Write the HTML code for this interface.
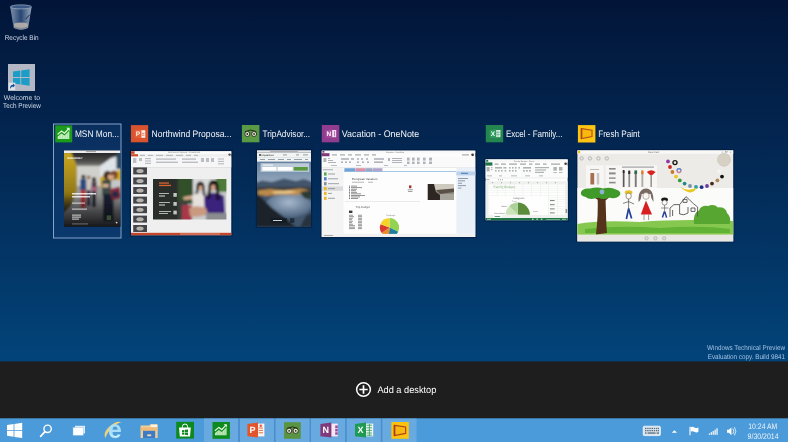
<!DOCTYPE html>
<html lang="en">
<head>
<meta charset="utf-8">
<title>Task View</title>
<style>
html,body{margin:0;padding:0;background:#021538;overflow:hidden;}
body{width:788px;height:442px;position:relative;font-family:"Liberation Sans",sans-serif;}
svg{position:absolute;left:0;top:0;display:block;}
text{font-family:"Liberation Sans",sans-serif;text-rendering:geometricPrecision;}
.t{fill:#f4f6fa;font-size:9.5px;}
.d{fill:#d2dbe8;font-size:7.1px;}
.w{fill:#a4c2e4;font-size:6.9px;}
.c{fill:#eaf3fb;font-size:8px;}
</style>
</head>
<body>
<svg width="788" height="442" viewBox="0 0 788 442">
<defs>
<linearGradient id="bg" x1="0" y1="0" x2="0" y2="1">
<stop offset="0" stop-color="#021538"/>
<stop offset="0.5" stop-color="#032b58"/>
<stop offset="1" stop-color="#02447a"/>
</linearGradient>
<filter id="b1" x="-5%" y="-5%" width="110%" height="110%"><feGaussianBlur stdDeviation="0.5"/></filter>
<filter id="b2" x="-5%" y="-5%" width="110%" height="110%"><feGaussianBlur stdDeviation="0.9"/></filter>
<filter id="b3" x="-10%" y="-10%" width="120%" height="120%"><feGaussianBlur stdDeviation="1.6"/></filter>
<clipPath id="c1"><rect x="64" y="150.3" width="56.5" height="76.4"/></clipPath>
<clipPath id="c2"><rect x="131" y="151.2" width="100.5" height="84.4"/></clipPath>
<clipPath id="c3"><rect x="257" y="150.3" width="54" height="76.4"/></clipPath>
<clipPath id="c4"><rect x="321.5" y="150.4" width="154" height="86.6"/></clipPath>
<clipPath id="c5"><rect x="485.4" y="159.2" width="82.4" height="61.2"/></clipPath>
<clipPath id="c6"><rect x="577.4" y="150.4" width="155.8" height="91"/></clipPath>
<linearGradient id="fl1" x1="0" y1="0" x2="0" y2="1"><stop offset="0" stop-color="#4a4a48"/><stop offset="0.5" stop-color="#1c1c20"/><stop offset="1" stop-color="#0e0f13"/></linearGradient>
<linearGradient id="lk1" x1="0" y1="0" x2="0" y2="1"><stop offset="0" stop-color="#c9a822"/><stop offset="0.7" stop-color="#8f7618"/><stop offset="1" stop-color="#2a2510"/></linearGradient>
<linearGradient id="sky3" x1="0" y1="0" x2="0" y2="1"><stop offset="0" stop-color="#5f7e9f"/><stop offset="1" stop-color="#93a6ba"/></linearGradient>
<radialGradient id="wat3" cx="0.5" cy="0.4" r="0.6"><stop offset="0" stop-color="#a6b8cc"/><stop offset="1" stop-color="#4e6580"/></radialGradient>
<linearGradient id="ce1" x1="0" y1="0" x2="0" y2="1"><stop offset="0" stop-color="#242424"/><stop offset="0.6" stop-color="#4a4a48"/><stop offset="1" stop-color="#8a8a87"/></linearGradient>
<linearGradient id="ov1" x1="0" y1="0" x2="0" y2="1"><stop offset="0" stop-color="#0c0d11" stop-opacity="0"/><stop offset="0.55" stop-color="#0c0d11" stop-opacity="0.6"/><stop offset="1" stop-color="#0c0d11" stop-opacity="0.95"/></linearGradient>
<clipPath id="c2s"><rect x="153" y="179" width="73.4" height="40.6"/></clipPath>
<filter id="noop" x="0" y="0" width="788" height="442" filterUnits="userSpaceOnUse"><feOffset dx="0" dy="0"/></filter>
<linearGradient id="bin" x1="0" y1="0" x2="1" y2="0"><stop offset="0" stop-color="#7a8ca4"/><stop offset="0.22" stop-color="#5a7294"/><stop offset="0.5" stop-color="#264572"/><stop offset="0.8" stop-color="#6c82a0"/><stop offset="1" stop-color="#93a2b6"/></linearGradient>
</defs>
<!-- BACKGROUND -->
<rect x="0" y="0" width="788" height="362" fill="url(#bg)"/>
<rect x="0" y="361.4" width="788" height="58" fill="#1e1e1e"/>
<rect x="0" y="418.3" width="788" height="24" fill="#4b9ad9"/>

<!-- DESKTOP ICONS -->
<g id="desk" filter="url(#noop)">
<!-- recycle bin -->
<path d="M10.2 7 L13.7 28 Q21 31.6 28.1 28 L31.6 7 Z" fill="url(#bin)"/>
<path d="M14 23.6 Q21 21.4 27.9 23.6 L27.6 27.8 Q21 31 14.3 27.8 Z" fill="#b7b0aa" fill-opacity="0.92"/>
<path d="M14.6 26.6 Q21 29.4 27.4 26.6 L27.4 28 Q21 31.2 14.5 28 Z" fill="#7e8894"/>
<ellipse cx="20.9" cy="6.9" rx="10.6" ry="2" fill="#3a5684" stroke="#8fa0b8" stroke-width="0.9"/>
<path d="M29.8 14.6 L25.6 19.2" stroke="#16233c" stroke-width="0.9"/>
<text class="d" x="21.7" y="40" text-anchor="middle" textLength="34" lengthAdjust="spacingAndGlyphs">Recycle Bin</text>
<!-- welcome -->
<rect x="8" y="64" width="27" height="27" fill="#b3b8c4"/>
<path d="M13 71.6 L20.3 70.5 V77 H13 Z M21.2 70.4 L29.6 69.2 V77 H21.2 Z M13 77.9 H20.3 V84.4 L13 83.3 Z M21.2 77.9 H29.6 V85.7 L21.2 84.5 Z" fill="#1c9cc6"/>
<rect x="8.6" y="82.6" width="6.6" height="7.4" fill="#dfe4ea"/>
<path d="M10 89 Q10 84.8 13 84.8 V83.5 L15 85.6 L13 87.6 V86.4 Q11.2 86.4 10 89 Z" fill="#14509a"/>
<text class="d" x="21.9" y="99.6" text-anchor="middle" textLength="36.2" lengthAdjust="spacingAndGlyphs">Welcome to</text>
<text class="d" x="21.9" y="108.3" text-anchor="middle" textLength="37.7" lengthAdjust="spacingAndGlyphs">Tech Preview</text>
</g>

<!-- TASK VIEW WINDOWS -->
<g id="wins" filter="url(#noop)">
<g fill="none" stroke="#00102c" stroke-opacity="0.4" stroke-width="1.2">
<rect x="130.4" y="150.2" width="101.7" height="85.8"/>
<rect x="256.4" y="149.4" width="55.2" height="78"/>
<rect x="320.9" y="149.8" width="155.2" height="87.8"/>
<rect x="484.8" y="158.6" width="83.6" height="62.4"/>
<rect x="576.8" y="149.8" width="157" height="92.2"/>
</g>
<!-- 1 MSN Money -->
<rect x="53.5" y="124" width="67.5" height="114" fill="#1a4580" fill-opacity="0.35" stroke="#86a4cb" stroke-width="1"/>
<g id="i-money">
<rect x="55.2" y="125.4" width="17" height="17" fill="#1b9a1b"/>
<path d="M57.7 138.9 V136.6 L61.5 133.5 L64.5 135.6 L69.3 130.8 V138.9 Z" fill="#c6efbf"/>
<path d="M60 135 V138.9 M62.6 134.6 V138.9 M65.2 135.2 V138.9 M67.6 133 V138.9" stroke="#8fd48a" stroke-width="0.5"/>
<path d="M57.6 134.4 L61.5 131 L64.5 133.2 L68.4 129" stroke="#e8fbe4" stroke-width="1.2" fill="none"/>
<path d="M66.4 127.8 H69.6 V131 Z" fill="#e8fbe4"/>
</g>
<text class="t" x="74.9" y="136.9" textLength="44.1" lengthAdjust="spacingAndGlyphs">MSN Mon...</text>
<g id="th1" clip-path="url(#c1)">
<rect x="64" y="150.3" width="56.5" height="76.4" fill="#18191d"/>
<g filter="url(#b2)">
<rect x="62" y="152" width="60" height="15" fill="url(#ce1)"/>
<rect x="74" y="166" width="28" height="21" fill="#d0d0cc"/>
<rect x="62" y="186" width="60" height="42" fill="#9c9c9a"/>
<path d="M62 152 H71 L77 166 V190 L71 206 L62 214 Z" fill="url(#lk1)"/>
<path d="M100 166 L111 158 L122 155 V174 L100 178 Z" fill="#dfe4e8"/>
<path d="M100 177 L122 169 V192 L100 187 Z" fill="#c9a92a"/>
<rect x="116.4" y="152" width="6" height="17" fill="#2c4660"/>
<!-- boy -->
<circle cx="83.4" cy="176.8" r="2.1" fill="#2a2020"/>
<rect x="80.2" y="179" width="6.2" height="11.6" rx="1" fill="#25487e"/>
<rect x="80.8" y="190" width="4.6" height="18" fill="#b8282c"/>
<!-- girls -->
<circle cx="88.6" cy="177.4" r="1.9" fill="#8a6a48"/>
<rect x="86.6" y="179.4" width="4" height="11" fill="#cfc4c0"/>
<rect x="86.8" y="190" width="3.6" height="16" fill="#22273a"/>
<circle cx="94" cy="179.4" r="2.1" fill="#241a18"/>
<rect x="91.6" y="181.4" width="5" height="10" fill="#4a4048"/>
<rect x="92" y="187" width="4.4" height="5" fill="#b06080"/>
<rect x="92" y="191" width="4" height="16" fill="#1c2030"/>
<!-- couple -->
<ellipse cx="107.6" cy="175.4" rx="4.2" ry="4.6" fill="#4a2a1e"/>
<ellipse cx="114" cy="175" rx="3.6" ry="4.4" fill="#7a4428"/>
<ellipse cx="109.6" cy="177" rx="1.8" ry="2.4" fill="#e0b090"/>
<ellipse cx="112.6" cy="177" rx="1.5" ry="2.2" fill="#d8a888"/>
<rect x="102" y="180" width="10" height="16" rx="2" fill="#3a4a44"/>
<rect x="111" y="180" width="10" height="13" rx="2" fill="#c4c6c8"/>
<rect x="102.6" y="184" width="6" height="3.4" fill="#d9b096"/>
<rect x="103" y="194" width="10.6" height="27" fill="#1a2136"/>
<path d="M110 189 L120 186.6 L121 198 L112 200.6 Z" fill="#8a2c3c"/>
<path d="M112 192 L118 190.4 L118.6 196 L113 197.6 Z" fill="#1e2a4a"/>
<rect x="62" y="192" width="60" height="36" fill="url(#ov1)"/>
</g>
<rect x="64" y="150.3" width="56.5" height="2.7" fill="#ecedee"/>
<rect x="86" y="151.3" width="10" height="0.8" fill="#8a8a8a"/>
<text x="67.2" y="158.6" font-size="2.5" font-weight="bold" fill="#fff">MSN MONEY</text>
<g fill="#fff" fill-opacity="0.8">
<rect x="72" y="193" width="24" height="1.5"/><rect x="72" y="196" width="18" height="1.5"/>
<rect x="72" y="202.6" width="13" height="1"/><rect x="72" y="208.6" width="15" height="1"/>
<rect x="72" y="214.6" width="9" height="1"/><rect x="72" y="216.6" width="9" height="1"/><rect x="72" y="218.6" width="7" height="1"/>
<rect x="72" y="223.6" width="16" height="0.7" fill-opacity="0.5"/>
</g>
<rect x="106.6" y="215.4" width="4.6" height="4.6" fill="#4a5a3a" fill-opacity="0.8"/>
<circle cx="116.6" cy="222.6" r="0.9" fill="#d8d8d8"/>
</g>
<!-- 2 PowerPoint -->
<g id="i-ppt">
<rect x="130.9" y="125.1" width="17.3" height="17.2" fill="#d9532f"/>
<rect x="140.8" y="130.2" width="4.5" height="7.6" fill="#fbeee6"/>
<path d="M141.8 133.4 H144.4 M141.8 135.2 H144.4" stroke="#d9532f" stroke-width="0.7"/>
<path d="M134.8 130 L141.4 129.2 V138.2 L134.8 137.4 Z" fill="#e5613a"/>
<text x="138" y="136.2" text-anchor="middle" font-size="6.6" font-weight="bold" fill="#fff3e6">P</text>
</g>
<text class="t" x="151.6" y="136.9" textLength="80" lengthAdjust="spacingAndGlyphs">Northwind Proposa...</text>
<g id="th2" clip-path="url(#c2)">
<rect x="131" y="150.8" width="100.5" height="84.6" fill="#efefef"/>
<rect x="131" y="150.8" width="100.5" height="3.4" fill="#fafafa"/>
<rect x="131" y="150.8" width="3.6" height="3" fill="#c9421f"/>
<rect x="131" y="154.2" width="7" height="2.4" fill="#d04a26"/>
<text x="168" y="153.4" font-size="2.2" fill="#777">Northwind Proposal - PowerPoint</text>
<rect x="131" y="156.6" width="100.5" height="10.4" fill="#f6f6f6"/>
<rect x="131" y="167" width="100.5" height="0.5" fill="#d4d4d4"/>
<g fill="#8a8f98" fill-opacity="0.55">
<rect x="140" y="154.8" width="5" height="1.2"/><rect x="148" y="154.8" width="5" height="1.2"/><rect x="156" y="154.8" width="7" height="1.2"/><rect x="166" y="154.8" width="7" height="1.2"/><rect x="176" y="154.8" width="7" height="1.2"/><rect x="186" y="154.8" width="5" height="1.2"/><rect x="194" y="154.8" width="4" height="1.2"/>
<rect x="133" y="158" width="3.4" height="5"/><rect x="139" y="158" width="3" height="3"/><rect x="145" y="158" width="6" height="1.2"/><rect x="145" y="160.4" width="6" height="1.2"/><rect x="145" y="162.8" width="6" height="1.2"/>
<rect x="156" y="158.4" width="20" height="1.4"/><rect x="156" y="161.6" width="22" height="1.4"/>
<rect x="182" y="158.4" width="14" height="1.4"/><rect x="182" y="161.6" width="16" height="1.4"/>
<rect x="201" y="158" width="3" height="4"/><rect x="206" y="158" width="3" height="4"/><rect x="211" y="158" width="3" height="4"/>
<rect x="218" y="158.4" width="6" height="1.2"/><rect x="218" y="160.8" width="6" height="1.2"/><rect x="218" y="163.2" width="6" height="1.2"/>
</g>
<circle cx="229.6" cy="154.6" r="1.2" fill="#5a4a3a"/>
<g filter="url(#b1)">
<rect x="133.2" y="167.4" width="13.8" height="7" fill="#45454a"/><ellipse cx="140" cy="171.0" rx="3.6" ry="2" fill="#b5b2ae"/>
<rect x="133.2" y="177.4" width="13.8" height="7" fill="#45454a"/><ellipse cx="140" cy="181.0" rx="3.6" ry="2" fill="#b5b2ae"/>
<rect x="133.2" y="187.0" width="13.8" height="7" fill="#45454a"/><ellipse cx="140" cy="190.6" rx="3.6" ry="2" fill="#b5b2ae"/>
<rect x="133.2" y="196.6" width="13.8" height="7" fill="#45454a"/><ellipse cx="140" cy="200.2" rx="3.6" ry="2" fill="#b5b2ae"/>
<rect x="133.2" y="206.2" width="13.8" height="7" fill="#45454a"/><ellipse cx="140" cy="209.8" rx="3.6" ry="2" fill="#b5b2ae"/>
<rect x="133.2" y="215.6" width="13.8" height="7" fill="#45454a"/><ellipse cx="140" cy="219.2" rx="3.6" ry="2" fill="#b5b2ae"/>
<rect x="133.2" y="225.0" width="13.8" height="7" fill="#45454a"/><ellipse cx="140" cy="228.6" rx="3.6" ry="2" fill="#b5b2ae"/>
</g>
<g clip-path="url(#c2s)"><g filter="url(#b2)">
<rect x="150" y="176" width="80" height="47" fill="#c9cbcb"/>
<rect x="150" y="176" width="29" height="47" fill="#2b2e2a"/>
<rect x="178" y="176" width="15" height="28" fill="#33502a"/>
<rect x="178" y="201" width="10" height="22" fill="#3a3f3a"/>
<rect x="216" y="176" width="14" height="16" fill="#4f7a3a"/>
<rect x="193" y="176" width="23" height="15" fill="#d9dbdb"/>
<rect x="182" y="205" width="10" height="18" fill="#a8394a"/>
<path d="M183 197 L194 195 L195 199 L184 200 Z" fill="#d4a88c"/>
<path d="M192 196 Q198 191 206 195 L208 209 H193 Z" fill="#e6e1dc"/>
<path d="M196.4 188 Q196 181.6 200.4 181.6 Q204.8 181.6 204.6 189 L205.4 196 H203 L202.6 190 H198.4 L197.6 194 H195.6 Z" fill="#1f1612"/>
<ellipse cx="200.6" cy="188" rx="2" ry="2.7" fill="#d6a88c"/>
<path d="M204 197 Q213 189 224 196 L225 215 H205 Z" fill="#3a217c"/>
<path d="M208.4 188 Q208 180 213.4 180 Q219 180 218.6 189 L220 200 H216.6 L216 190 H211 L210 199 H207 Z" fill="#17100e"/>
<ellipse cx="213.2" cy="187.6" rx="2.3" ry="3.1" fill="#d2a184"/>
<path d="M189 208 Q196 204.6 206 208 L208 214 Q198 218 190 216 Z" fill="#c99a80"/>
<rect x="206" y="213" width="24" height="10" fill="#8a8c90"/>
</g></g>
<rect x="159" y="182.4" width="10" height="1.3" fill="#d9642e"/><rect x="159" y="184.8" width="12" height="1.3" fill="#d9642e"/>
<g fill="#e8e8e8" fill-opacity="0.8"><rect x="159" y="193" width="10" height="0.9"/><rect x="159" y="195.4" width="6" height="1.2"/><rect x="159" y="202" width="11" height="0.9"/><rect x="159" y="204.4" width="6" height="1.2"/><rect x="159" y="211" width="12" height="0.9"/><rect x="159" y="213" width="9" height="0.9"/>
<rect x="173.4" y="193" width="3.4" height="3.8"/><rect x="173.4" y="202" width="3.4" height="3.8"/><rect x="173.4" y="210.6" width="3.4" height="3.8"/></g>
<rect x="131" y="232.8" width="100.5" height="2.6" fill="#c5462a"/>
<rect x="180" y="233.6" width="40" height="0.8" fill="#e9a090"/>
</g>
<!-- 3 TripAdvisor -->
<g id="i-trip">
<rect x="241.9" y="125" width="17.5" height="17.3" fill="#5b9a44"/>
<path d="M245 131.6 Q250.7 128.6 256.4 131.6" stroke="#222a1c" stroke-width="1" fill="none"/>
<circle cx="247.3" cy="134" r="2.5" fill="#ecebd6" stroke="#222a1c" stroke-width="0.9"/>
<circle cx="254.1" cy="134" r="2.5" fill="#ecebd6" stroke="#222a1c" stroke-width="0.9"/>
<circle cx="247.3" cy="134" r="0.9" fill="#222a1c"/>
<circle cx="254.1" cy="134" r="0.9" fill="#222a1c"/>
</g>
<text class="t" x="262.6" y="136.9" textLength="47.5" lengthAdjust="spacingAndGlyphs">TripAdvisor...</text>
<g id="th3" clip-path="url(#c3)">
<rect x="257" y="150" width="54" height="77" fill="#26303c"/>
<g filter="url(#b2)">
<rect x="255" y="160" width="58" height="22" fill="url(#sky3)"/>
<path d="M255 183 L262 180.5 L272 182 L284 178.5 L296 181 L304 179 L313 182 V190 H255 Z" fill="#42546a"/>
<rect x="255" y="187" width="58" height="14" fill="#3a3c40"/>
<rect x="255" y="196" width="58" height="32" fill="#3f546c"/>
<ellipse cx="289" cy="205" rx="23" ry="12.5" fill="url(#wat3)"/>
<path d="M258 190.6 L270 189 L284 190.6 L300 188.6 L311 190.6 L311 193.6 L296 195 L280 194.4 L266 196 L258 194.4 Z" fill="#b98a4a"/>
<path d="M272 191.4 L290 190.6 L298 192 L288 193.6 L274 193.6 Z" fill="#ecc98a"/>
<path d="M255 194 L262 198 L272 208 L284 217 L296 227 H255 Z" fill="#1b222b"/>
<path d="M313 212 L306 216 L300 227 H313 Z" fill="#27313c"/>
<path d="M300 192 L311 190 V200 L304 198 Z" fill="#2c3a34"/>
</g>
<rect x="257" y="150" width="54" height="2.6" fill="#e4e6e8"/>
<rect x="270" y="150.9" width="28" height="0.8" fill="#7a7a7a" fill-opacity="0.7"/>
<rect x="257" y="152.6" width="54" height="9" fill="#f2f4f3"/>
<rect x="257" y="157.4" width="54" height="0.4" fill="#c9cdcf"/>
<circle cx="260" cy="155" r="1" fill="#3a3a3a"/>
<text x="261.6" y="155.8" font-size="2.4" font-weight="bold" fill="#3c4a3c">tripadvisor</text>
<g fill="#6b7c86" fill-opacity="0.7"><rect x="283" y="154.4" width="4" height="1"/><rect x="296" y="154.4" width="3" height="1"/><rect x="303" y="154.4" width="5" height="1"/>
<rect x="260" y="159" width="5" height="1"/><rect x="268" y="159" width="7" height="1"/><rect x="278" y="159" width="6" height="1"/><rect x="287" y="159" width="4" height="1"/><rect x="294" y="159" width="8" height="1"/><rect x="305" y="159" width="3" height="1"/></g>
<rect x="260.6" y="163.2" width="48.6" height="8.6" fill="#eef3f6" fill-opacity="0.62"/>
<rect x="262.4" y="167" width="14" height="3.6" fill="#fff"/>
<rect x="277.6" y="167" width="15" height="3.6" fill="#fff"/>
<rect x="293.8" y="167" width="14" height="3.6" fill="#5a9a3e"/>
<rect x="263" y="164.6" width="10" height="0.9" fill="#fff"/>
<rect x="270.8" y="218.2" width="15.8" height="4.6" fill="#141a22" fill-opacity="0.85"/>
<rect x="273" y="220" width="9" height="1" fill="#c9d1d9"/>
<rect x="290" y="218.2" width="4.4" height="4.6" fill="#141a22" fill-opacity="0.7"/>
</g>
<!-- 4 OneNote -->
<g id="i-on">
<rect x="321.8" y="125" width="17.5" height="17.3" fill="#913c8e"/>
<rect x="331.4" y="130" width="4.8" height="7.2" fill="#f3e3f2"/>
<path d="M334.6 131 V136.4" stroke="#b56bb2" stroke-width="1"/>
<path d="M325.6 130 L332.2 129.2 V138.2 L325.6 137.4 Z" fill="#a24a9f"/>
<text x="328.8" y="136" text-anchor="middle" font-size="6.4" font-weight="bold" fill="#fff">N</text>
</g>
<text class="t" x="341.8" y="136.9" textLength="77.5" lengthAdjust="spacingAndGlyphs">Vacation - OneNote</text>
<g id="th4" clip-path="url(#c4)">
<rect x="321.5" y="150.4" width="154" height="86.6" fill="#fdfdfe"/>
<rect x="321.5" y="150.4" width="154" height="2.8" fill="#f8f8f9"/>
<rect x="322.4" y="150.9" width="2" height="1.8" fill="#80397b"/>
<text x="386" y="152.6" font-size="2.1" fill="#777">Vacation - OneNote</text>
<rect x="321.5" y="153.2" width="8" height="3.2" fill="#80397b"/>
<g fill="#6a6f78" fill-opacity="0.7"><rect x="332" y="154.4" width="5" height="1"/><rect x="340" y="154.4" width="5" height="1"/><rect x="348" y="154.4" width="4" height="1"/><rect x="355" y="154.4" width="6" height="1"/><rect x="364" y="154.4" width="5" height="1"/><rect x="372" y="154.4" width="4" height="1"/><rect x="462" y="154.4" width="7" height="1"/></g>
<circle cx="472.6" cy="154.8" r="1.4" fill="#4a3a30"/>
<rect x="321.5" y="156.6" width="154" height="10.8" fill="#fafafb"/>
<rect x="321.5" y="167.4" width="154" height="0.5" fill="#d8d8dc"/>
<g fill="#7f8590" fill-opacity="0.6">
<rect x="323.4" y="158" width="3" height="4"/><rect x="328" y="158" width="2" height="1"/><rect x="328" y="160" width="5" height="1"/><rect x="328" y="162" width="8" height="1"/>
<rect x="341" y="158.2" width="8" height="1.6"/><rect x="351" y="158.2" width="3" height="1.6"/><rect x="357" y="158.2" width="2" height="1.6"/><rect x="361" y="158.2" width="2" height="1.6"/><rect x="366" y="158.2" width="2" height="1.6"/>
<rect x="341" y="161.4" width="2" height="1.6"/><rect x="345" y="161.4" width="2" height="1.6"/><rect x="349" y="161.4" width="2" height="1.6"/><rect x="357" y="161.4" width="2" height="1.6"/><rect x="362" y="161.4" width="2" height="1.6"/><rect x="367" y="161.4" width="2" height="1.6"/>
<rect x="374" y="158.2" width="10" height="1.6"/><rect x="374" y="161.4" width="9" height="1.6"/><rect x="388" y="158" width="2" height="3"/>
<rect x="392" y="158" width="10" height="1"/><rect x="392" y="160" width="10" height="1"/><rect x="392" y="162" width="10" height="1"/>
<rect x="407" y="157.6" width="2.6" height="3"/><rect x="412" y="157.6" width="2.6" height="3"/><rect x="417" y="157.6" width="2.6" height="3"/><rect x="423" y="157.6" width="2.6" height="3"/><rect x="429" y="157.6" width="3" height="3"/>
<rect x="407" y="161.6" width="2.6" height="2.4"/><rect x="412" y="161.6" width="2.6" height="2.4"/><rect x="417" y="161.6" width="2.6" height="2.4"/><rect x="423" y="161.6" width="2.6" height="2.4"/><rect x="429" y="161.6" width="3" height="2.4"/>
<rect x="331" y="165" width="6" height="0.9"/><rect x="356" y="165" width="5" height="0.9"/><rect x="384" y="165" width="4" height="0.9"/><rect x="404" y="165" width="3" height="0.9"/>
</g>
<rect x="321.5" y="167.9" width="22" height="66" fill="#f4f4f5"/>
<rect x="323" y="169.2" width="10" height="1" fill="#8a8f98" fill-opacity="0.7"/>
<rect x="324" y="172.4" width="2.6" height="3.2" fill="#5aa84a"/><rect x="328" y="173.5" width="7" height="1" fill="#7a7f86" fill-opacity="0.7"/>
<rect x="324" y="177.2" width="2.6" height="3.2" fill="#4a7fc4"/><rect x="328" y="178.3" width="10" height="1" fill="#7a7f86" fill-opacity="0.7"/>
<rect x="324" y="182.1" width="2.6" height="3.2" fill="#8a8f98"/><rect x="328" y="183.2" width="11" height="1" fill="#7a7f86" fill-opacity="0.7"/>
<rect x="322" y="186.4" width="21" height="4.4" fill="#d9dadb"/><rect x="324" y="187.0" width="2.6" height="3.2" fill="#e8b828"/><rect x="328" y="188.1" width="7" height="1" fill="#7a7f86" fill-opacity="0.7"/>
<rect x="324" y="191.8" width="2.6" height="3.2" fill="#e8b828"/><rect x="328" y="192.9" width="4" height="1" fill="#7a7f86" fill-opacity="0.7"/>
<rect x="324" y="196.7" width="2.6" height="3.2" fill="#e8b828"/><rect x="328" y="197.8" width="7" height="1" fill="#7a7f86" fill-opacity="0.7"/>
<rect x="344.4" y="168.2" width="11" height="3.2" fill="#6fa3d8"/>
<rect x="355.6" y="168.2" width="9.4" height="3.2" fill="#de8ea4"/>
<rect x="365.2" y="168.2" width="7" height="3.2" fill="#9aa6c4"/>
<rect x="372.4" y="168.2" width="10" height="3.2" fill="#b0a6c9"/>
<rect x="344" y="171.4" width="112" height="0.6" fill="#6fa3d8"/>
<text x="352" y="180" font-size="3" fill="#444">European Vacation</text>
<rect x="352" y="181.8" width="12" height="0.7" fill="#9a9a9a"/><rect x="368" y="181.8" width="5" height="0.7" fill="#9a9a9a"/>
<rect x="349" y="185.60" width="1" height="1" fill="#6a6a6a"/><rect x="351" y="185.70" width="6" height="0.8" fill="#5a5a5a" fill-opacity="0.8"/><rect x="349" y="187.15" width="1" height="1" fill="#6a6a6a"/><rect x="351" y="187.25" width="11" height="0.8" fill="#5a5a5a" fill-opacity="0.8"/><rect x="349" y="188.70" width="1" height="1" fill="#6a6a6a"/><rect x="351" y="188.80" width="6" height="0.8" fill="#5a5a5a" fill-opacity="0.8"/><rect x="349" y="190.25" width="1" height="1" fill="#6a6a6a"/><rect x="351" y="190.35" width="5" height="0.8" fill="#5a5a5a" fill-opacity="0.8"/><rect x="349" y="191.80" width="1" height="1" fill="#6a6a6a"/><rect x="351" y="191.90" width="6" height="0.8" fill="#5a5a5a" fill-opacity="0.8"/><rect x="349" y="193.35" width="1" height="1" fill="#6a6a6a"/><rect x="351" y="193.45" width="10" height="0.8" fill="#5a5a5a" fill-opacity="0.8"/><rect x="349" y="194.90" width="1" height="1" fill="#6a6a6a"/><rect x="351" y="195.00" width="14" height="0.8" fill="#5a5a5a" fill-opacity="0.8"/><rect x="349" y="196.45" width="1" height="1" fill="#6a6a6a"/><rect x="351" y="196.55" width="9" height="0.8" fill="#5a5a5a" fill-opacity="0.8"/><rect x="349" y="198.00" width="1" height="1" fill="#6a6a6a"/><rect x="351" y="198.10" width="7" height="0.8" fill="#5a5a5a" fill-opacity="0.8"/><rect x="345" y="201.6" width="75" height="0.4" fill="#d0d0d4"/>
<text x="355.6" y="208" font-size="2.8" fill="#555">Trip Budget</text>
<rect x="349" y="210.6" width="3.4" height="2.4" fill="#3a3a3a"/>
<rect x="349" y="214.80" width="4" height="0.8" fill="#555" fill-opacity="0.75"/><rect x="358" y="214.80" width="4" height="0.8" fill="#555" fill-opacity="0.75"/><rect x="349" y="216.30" width="5" height="0.8" fill="#555" fill-opacity="0.75"/><rect x="358" y="216.30" width="4" height="0.8" fill="#555" fill-opacity="0.75"/><rect x="349" y="217.80" width="4" height="0.8" fill="#555" fill-opacity="0.75"/><rect x="358" y="217.80" width="4" height="0.8" fill="#555" fill-opacity="0.75"/><rect x="349" y="219.30" width="3" height="0.8" fill="#555" fill-opacity="0.75"/><rect x="358" y="219.30" width="4" height="0.8" fill="#555" fill-opacity="0.75"/><rect x="349" y="220.80" width="4" height="0.8" fill="#555" fill-opacity="0.75"/><rect x="358" y="220.80" width="4" height="0.8" fill="#555" fill-opacity="0.75"/><rect x="349" y="222.30" width="3" height="0.8" fill="#555" fill-opacity="0.75"/><rect x="358" y="222.30" width="4" height="0.8" fill="#555" fill-opacity="0.75"/><rect x="349" y="223.80" width="4" height="0.8" fill="#555" fill-opacity="0.75"/><rect x="358" y="223.80" width="4" height="0.8" fill="#555" fill-opacity="0.75"/><rect x="349" y="225.30" width="6" height="0.8" fill="#555" fill-opacity="0.75"/><rect x="358" y="225.30" width="4" height="0.8" fill="#555" fill-opacity="0.75"/><rect x="349" y="226.80" width="6" height="0.8" fill="#555" fill-opacity="0.75"/><rect x="358" y="226.80" width="4" height="0.8" fill="#555" fill-opacity="0.75"/><rect x="349" y="228.30" width="6" height="0.8" fill="#555" fill-opacity="0.75"/><rect x="358" y="228.30" width="4" height="0.8" fill="#555" fill-opacity="0.75"/><path d="M389.5 227.6 L389.50 218.00 A9.6 9.6 0 0 1 398.20 231.66 Z" fill="#93d34f"/><path d="M389.5 227.6 L398.20 231.66 A9.6 9.6 0 0 1 388.66 237.16 Z" fill="#1f7f9a"/><path d="M389.5 227.6 L388.66 237.16 A9.6 9.6 0 0 1 381.64 233.11 Z" fill="#f08a24"/><path d="M389.5 227.6 L381.64 233.11 A9.6 9.6 0 0 1 380.48 224.32 Z" fill="#d93a2e"/><path d="M389.5 227.6 L380.48 224.32 A9.6 9.6 0 0 1 389.50 218.00 Z" fill="#f5d327"/><text x="386" y="216.4" font-size="1.8" fill="#777">Trip Budget</text>
<rect x="409" y="185.4" width="2.4" height="2.8" fill="#a8322a"/>
<rect x="407.6" y="189.4" width="5.4" height="0.8" fill="#8a8a8a"/><rect x="408" y="191" width="4.4" height="0.8" fill="#8a8a8a"/>
<g filter="url(#b1)">
<rect x="427.8" y="184" width="26.2" height="16" fill="#8f8a80"/>
<rect x="433" y="184" width="21" height="6.5" fill="#cfcabf"/>
<path d="M427.8 184 H434 L436 192 L440 195 V200 H427.8 Z" fill="#2f2620"/>
<path d="M436 190 L454 188.4 V192 L440 194 Z" fill="#5a5046"/>
<rect x="440" y="194" width="14" height="6" fill="#a5a39c"/>
</g>
<rect x="456.4" y="167.9" width="19.2" height="66" fill="#eaf0f8"/>
<rect x="456.4" y="171.4" width="19.2" height="4" fill="#bcd2ec"/>
<rect x="461" y="172.8" width="7" height="1" fill="#4a78b0"/>
<g fill="#6a7a90" fill-opacity="0.8"><rect x="458" y="178" width="10" height="0.9"/><rect x="458" y="180.4" width="7" height="0.9"/><rect x="458" y="182.8" width="4" height="0.9"/><rect x="458" y="185.2" width="8" height="0.9"/><rect x="458" y="187.6" width="3.4" height="0.9"/></g>
<rect x="321.5" y="233.9" width="154" height="3.1" fill="#f1f1f2"/>
<rect x="324" y="235" width="9" height="0.8" fill="#9a9a9a"/>
</g>
<!-- 5 Excel -->
<g id="i-xl">
<rect x="485.8" y="125" width="17.4" height="17.3" fill="#25854f"/>
<rect x="495.6" y="130" width="4.8" height="7.2" fill="#e3f3e8"/>
<path d="M498 130.4 V137 M496 132.4 H500 M496 134.6 H500" stroke="#4aa672" stroke-width="0.6"/>
<path d="M489.6 130 L496.2 129.2 V138.2 L489.6 137.4 Z" fill="#2f9a5e"/>
<text x="492.8" y="136" text-anchor="middle" font-size="6.4" font-weight="bold" fill="#fff">X</text>
</g>
<text class="t" x="506" y="136.9" textLength="56.4" lengthAdjust="spacingAndGlyphs">Excel - Family...</text>
<g id="th5" clip-path="url(#c5)">
<rect x="485.4" y="159.2" width="82.4" height="61.2" fill="#fdfefd"/>
<rect x="485.4" y="159.2" width="82.4" height="3.2" fill="#f7f8f7"/>
<rect x="486.2" y="159.8" width="2" height="1.9" fill="#1e7145"/>
<text x="514" y="161.7" font-size="2.1" fill="#777">Family Budget - Excel</text>
<rect x="485.4" y="162.4" width="7" height="3.4" fill="#1f7446"/>
<g fill="#5a6a60" fill-opacity="0.7"><rect x="494.6" y="163.6" width="4" height="1"/><rect x="501" y="163.6" width="5" height="1"/><rect x="509" y="163.6" width="8" height="1"/><rect x="520" y="163.6" width="6" height="1"/><rect x="529" y="163.6" width="3.4" height="1"/><rect x="535" y="163.6" width="5" height="1"/><rect x="543" y="163.6" width="3.6" height="1"/><rect x="551" y="163.6" width="9" height="1"/></g>
<circle cx="565.6" cy="163.8" r="1.3" fill="#4a3a30"/>
<rect x="485.4" y="165.8" width="82.4" height="12" fill="#fafbfa"/>
<g fill="#7a857e" fill-opacity="0.6">
<rect x="486.6" y="167" width="3" height="4.4"/><rect x="491" y="167" width="1.4" height="1.2"/><rect x="491" y="169" width="1.4" height="1.2"/>
<rect x="495" y="167" width="7" height="1.6"/><rect x="503.4" y="167" width="3" height="1.6"/><rect x="495" y="170" width="1.6" height="1.6"/><rect x="498" y="170" width="1.6" height="1.6"/><rect x="501" y="170" width="1.6" height="1.6"/><rect x="504.6" y="170" width="1.6" height="1.6"/>
<rect x="509" y="167" width="1.6" height="1.6"/><rect x="512" y="167" width="1.6" height="1.6"/><rect x="515" y="167" width="1.6" height="1.6"/><rect x="509" y="170" width="1.6" height="1.6"/><rect x="512" y="170" width="1.6" height="1.6"/><rect x="515" y="170" width="1.6" height="1.6"/><rect x="518.4" y="167" width="1.6" height="1.6"/>
<rect x="523" y="167" width="8" height="1.6"/><rect x="523" y="170" width="1.8" height="1.6"/><rect x="526" y="170" width="1.8" height="1.6"/><rect x="529" y="170" width="1.8" height="1.6"/>
<rect x="535" y="167" width="14" height="1.2"/><rect x="535" y="169.4" width="11" height="1.2"/><rect x="535" y="171.8" width="9" height="1.2"/>
<rect x="553.4" y="167" width="3.4" height="3.6"/><rect x="559" y="167" width="3.4" height="3.6"/><rect x="553.4" y="172" width="3.4" height="0.9"/><rect x="559" y="172" width="3.4" height="0.9"/>
<rect x="487" y="175.4" width="5" height="0.9"/><rect x="499" y="175.4" width="3" height="0.9"/><rect x="511" y="175.4" width="6" height="0.9"/><rect x="525" y="175.4" width="5" height="0.9"/><rect x="539" y="175.4" width="4" height="0.9"/>
</g>
<rect x="485.4" y="177.8" width="82.4" height="0.4" fill="#d5dad5"/>
<rect x="485.4" y="181.2" width="82.4" height="2.8" fill="#eef0ee"/>
<rect x="485.4" y="184" width="3" height="31" fill="#eef0ee"/>
<g fill="#7a857e" fill-opacity="0.7"><rect x="486.4" y="179.2" width="3" height="1"/><rect x="498" y="179.2" width="1" height="1"/><rect x="500" y="179.2" width="1" height="1"/><rect x="502" y="179.2" width="1" height="1"/>
<rect x="492" y="182.2" width="1" height="1"/><rect x="501" y="182.2" width="1" height="1"/><rect x="510" y="182.2" width="1" height="1"/><rect x="519" y="182.2" width="1" height="1"/><rect x="528" y="182.2" width="1" height="1"/><rect x="537" y="182.2" width="1" height="1"/><rect x="546" y="182.2" width="1" height="1"/><rect x="555" y="182.2" width="1" height="1"/></g>
<rect x="497.0" y="184" width="0.3" height="31" fill="#dde3dd"/><rect x="505.6" y="184" width="0.3" height="31" fill="#dde3dd"/><rect x="514.2" y="184" width="0.3" height="31" fill="#dde3dd"/><rect x="522.8" y="184" width="0.3" height="31" fill="#dde3dd"/><rect x="531.4" y="184" width="0.3" height="31" fill="#dde3dd"/><rect x="540.0" y="184" width="0.3" height="31" fill="#dde3dd"/><rect x="548.6" y="184" width="0.3" height="31" fill="#dde3dd"/><rect x="557.2" y="184" width="0.3" height="31" fill="#dde3dd"/><rect x="565.8" y="184" width="0.3" height="31" fill="#dde3dd"/><rect x="485.4" y="184.0" width="80" height="0.25" fill="#dde3dd"/><rect x="485.4" y="186.2" width="80" height="0.25" fill="#dde3dd"/><rect x="485.4" y="188.4" width="80" height="0.25" fill="#dde3dd"/><rect x="485.4" y="190.6" width="80" height="0.25" fill="#dde3dd"/><rect x="485.4" y="192.8" width="80" height="0.25" fill="#dde3dd"/><rect x="485.4" y="195.0" width="80" height="0.25" fill="#dde3dd"/><rect x="485.4" y="197.2" width="80" height="0.25" fill="#dde3dd"/><rect x="485.4" y="199.4" width="80" height="0.25" fill="#dde3dd"/><rect x="485.4" y="201.6" width="80" height="0.25" fill="#dde3dd"/><rect x="485.4" y="203.8" width="80" height="0.25" fill="#dde3dd"/><rect x="485.4" y="206.0" width="80" height="0.25" fill="#dde3dd"/><rect x="485.4" y="208.2" width="80" height="0.25" fill="#dde3dd"/><rect x="485.4" y="210.4" width="80" height="0.25" fill="#dde3dd"/><rect x="485.4" y="212.6" width="80" height="0.25" fill="#dde3dd"/><rect x="485.4" y="214.8" width="80" height="0.25" fill="#dde3dd"/><rect x="490" y="196" width="58" height="19" fill="#fdfefd"/>
<text x="493.6" y="187.8" font-size="3.3" fill="#8ab57a">Family Budget</text>
<text x="513.2" y="198.6" font-size="2.3" fill="#6a6a6a">Categories</text>
<path d="M517.8 214.8 L517.80 202.60 A12.2 12.2 0 0 1 530.00 214.80 Z" fill="#5b8c3c"/><path d="M517.8 214.8 L505.60 214.80 A12.2 12.2 0 0 1 509.17 206.17 Z" fill="#c9e2ba"/><path d="M517.8 214.8 L509.17 206.17 A12.2 12.2 0 0 1 517.80 202.60 Z" fill="#aed19a"/><text x="501" y="206.8" font-size="1.9" fill="#666">Utilities</text>
<text x="533" y="212" font-size="1.9" fill="#666">Food</text>
<text x="494" y="214.4" font-size="1.9" fill="#666">Phone/Email</text>
<text x="512" y="202.4" font-size="1.7" fill="#777">Travel</text>
<g fill="#5a5a5a" fill-opacity="0.75"><rect x="550" y="200" width="4.6" height="1"/><rect x="550" y="204.2" width="4.6" height="1"/><rect x="550" y="208.4" width="4.6" height="1"/><rect x="550" y="212.4" width="4.6" height="1"/></g>
<rect x="565" y="184" width="2.8" height="31" fill="#eef0ee"/>
<rect x="565.6" y="209" width="1.6" height="4" fill="#8a958e"/>
<rect x="485.4" y="215" width="82.4" height="3" fill="#eef0ee"/>
<rect x="493" y="215.4" width="9" height="2.4" fill="#fdfefd"/>
<rect x="494.6" y="216.2" width="5.6" height="0.8" fill="#3f8a5a"/>
<rect x="485.4" y="218" width="82.4" height="2.5" fill="#1f7446"/>
<g fill="#bfe0cc"><rect x="487" y="218.8" width="4" height="0.8"/><rect x="532" y="218.6" width="1.6" height="1.2"/><rect x="536.4" y="218.6" width="1.6" height="1.2"/><rect x="540.8" y="218.6" width="1.6" height="1.2"/><rect x="546" y="219" width="14" height="0.5"/><rect x="562" y="218.8" width="4" height="0.8"/></g>
</g>
<!-- 6 Fresh Paint -->
<g id="i-fp">
<rect x="577.9" y="125.1" width="17.5" height="17.4" fill="#fdc513"/>
<path d="M581.6 128.6 L592 130.2 V136.6 L581.6 138.6 Z" fill="#f9b80e" stroke="#b5531a" stroke-width="1.2" stroke-linejoin="miter"/>
<path d="M581.4 128.2 V139" stroke="#a94a16" stroke-width="1.6"/>
</g>
<text class="t" x="598.2" y="136.9" textLength="41.6" lengthAdjust="spacingAndGlyphs">Fresh Paint</text>
<g id="th6" clip-path="url(#c6)">
<rect x="577.4" y="150.4" width="155.8" height="91" fill="#ecebe8"/>
<rect x="577.4" y="150.4" width="155.8" height="3.4" fill="#f8f8f7"/>
<rect x="578" y="151" width="2.2" height="2.2" fill="#f5c116"/>
<text x="648" y="153" font-size="2.2" fill="#666">Fresh Paint</text>
<g fill="#888" fill-opacity="0.8"><rect x="721.6" y="151.8" width="1.8" height="0.6"/><rect x="725.6" y="151.4" width="1.6" height="1.4" fill="none" stroke="#888" stroke-width="0.4"/><rect x="729.6" y="151.8" width="1.8" height="0.6"/></g>
<g fill="#e0dfdc" stroke="#9a9a98" stroke-width="0.5"><circle cx="581.6" cy="158.4" r="1.8"/><circle cx="590" cy="158.4" r="1.8"/><circle cx="598.4" cy="158.4" r="1.8"/><circle cx="606.8" cy="158.4" r="1.8"/></g>
<rect x="586" y="165.2" width="17.8" height="23" fill="#f7f6f4"/>
<rect x="605.6" y="165.2" width="51.4" height="23" fill="#f7f6f4"/>
<rect x="590.4" y="173" width="3.8" height="11.6" rx="0.6" fill="#a86e50"/>
<rect x="596.8" y="173" width="2.4" height="11.6" rx="0.6" fill="#c9c6c2"/>
<rect x="590" y="169" width="9" height="0.8" fill="#b0afac"/>
<g fill="#6f6f72" fill-opacity="0.8"><rect x="609" y="168" width="6.6" height="1.6"/><rect x="609" y="172.4" width="6.6" height="2"/><rect x="609" y="177.4" width="6.6" height="1.4"/><rect x="609" y="181.8" width="6.6" height="1.6"/></g>
<rect x="622" y="166.6" width="32" height="1" fill="#8f9296"/>
<g>
<rect x="622.8" y="171" width="1.7" height="16" fill="#5a5a5c"/><rect x="622.8" y="170" width="1.7" height="3" fill="#2a2a2a"/>
<rect x="628.4" y="172" width="1.7" height="15" fill="#8a8a88"/><rect x="628.2" y="170.6" width="2.1" height="3.4" fill="#2f2f30"/>
<rect x="634.8" y="172" width="1.9" height="15" fill="#7a7a78"/><rect x="634.4" y="170.4" width="2.7" height="3.6" fill="#2f6a4a"/>
<rect x="641.4" y="172" width="1.9" height="15" fill="#b0aca6"/><rect x="641.2" y="170.4" width="2.3" height="3.8" fill="#e07a2a"/>
<rect x="650.4" y="174" width="1.6" height="13" fill="#9a9690"/><path d="M646.8 172 Q651.2 168.4 655.6 172 L652.4 175 H650 Z" fill="#d8241e"/>
</g>
<rect x="577.4" y="188" width="155.8" height="47" fill="#fbfbfa"/>
<circle cx="724" cy="159.8" r="6.4" fill="#d7d1c5" stroke="#c4beb2" stroke-width="0.6"/>
<circle cx="675" cy="162.6" r="2" fill="none" stroke="#1a1a1a" stroke-width="1.4"/>
<circle cx="679" cy="170.6" r="1.9" fill="none" stroke="#c87a9a" stroke-width="1.3"/>
<path d="M677.1 170.6 A1.9 1.9 0 0 1 680.9 170.6" fill="none" stroke="#4a8ad8" stroke-width="1.3"/>
<circle cx="668.0" cy="161.4" r="1.9" fill="#8a3aa8"/><circle cx="670.0" cy="167.0" r="1.9" fill="#c8281e"/><circle cx="672.4" cy="172.0" r="1.9" fill="#c87a2a"/><circle cx="676.0" cy="176.6" r="1.9" fill="#e8c81e"/><circle cx="679.8" cy="180.4" r="1.9" fill="#3a9a3a"/><circle cx="684.6" cy="183.6" r="1.9" fill="#1f8a8a"/><circle cx="690.0" cy="186.0" r="1.9" fill="#7a8fa8"/><circle cx="696.0" cy="187.0" r="1.9" fill="#1fa0a8"/><circle cx="701.6" cy="187.2" r="1.9" fill="#1f2f8a"/><circle cx="707.0" cy="186.0" r="1.9" fill="#6a3a9a"/><circle cx="712.0" cy="183.6" r="1.9" fill="#4a2a1a"/><circle cx="717.4" cy="180.4" r="1.9" fill="#b08a5a"/><circle cx="722.0" cy="176.6" r="1.9" fill="#111111"/><circle cx="719.0" cy="171.4" r="1.9" fill="#f4f4f4"/><path d="M680.4 187 Q688 192 697 187.6 Q691 197.6 680.4 187 Z" fill="#e8c81e"/>
<!-- grass -->
<g filter="url(#b1)">
<path d="M577.4 224 Q600 219.6 640 222 Q680 218.6 733.2 221 V234.8 H577.4 Z" fill="#86c850"/>
<path d="M585 229 Q620 225 660 228 Q700 225 730 229 V233 H585 Z" fill="#62b234"/>
<!-- bush -->
<path d="M694 224 Q692.6 213 699 210.4 Q701 205 708 206 Q714 203.6 718 207.4 Q726 207 727 213 Q731.6 217 729.6 224 Z" fill="#58a630"/>
<!-- tree -->
<path d="M597.6 196 L605.4 195 L606 214 Q606.4 228 607 233 L596 234.4 Q598.4 214 597.6 196 Z" fill="#54301a"/>
<path d="M598 199 L590 193.6 M605 200 L612 194" stroke="#54301a" stroke-width="1.6"/>
<path d="M581 192 Q583 187.6 590 188.6 Q597 186.4 603 188.4 Q611 186.8 616 189.4 Q621.6 191 620 195 Q616 199.6 609 197.6 Q604 200.6 598 197.6 Q590 200.8 585.6 197 Q580 196 581 192 Z" fill="#3f9a2c"/>
<circle cx="602" cy="192" r="2.4" fill="#8fb0d0"/>
</g>
<!-- boy -->
<ellipse cx="628.6" cy="192.4" rx="3.8" ry="2.2" fill="#e8c02a"/>
<ellipse cx="628.6" cy="196" rx="2.7" ry="3" fill="#fdfaf4" stroke="#3a3a3a" stroke-width="0.5"/>
<path d="M628.6 199 V209 M623 203.4 L628.6 201.6 L634 204" stroke="#4a4a4a" stroke-width="0.7" fill="none"/>
<path d="M628.6 208.6 L626.4 219 M628.6 208.6 L631.6 218.6" stroke="#23409a" stroke-width="1.7" fill="none"/>
<!-- girl -->
<path d="M638.6 202 Q637.6 189 646 188.4 Q654 188.6 653.4 202 Q650.6 198 650.6 194 H641.6 Q641.6 199 638.6 202 Z" fill="#7a6a64"/>
<ellipse cx="646" cy="196" rx="3.2" ry="3.4" fill="#fdf6ee" stroke="#4a4a4a" stroke-width="0.4"/>
<path d="M646 200.6 L640.8 214.6 H652 Z" fill="#d81e1e"/>
<path d="M644 214.6 V220 M648.6 214.6 V220" stroke="#5a5a5a" stroke-width="0.6"/>
<!-- small boy -->
<ellipse cx="664.6" cy="199.6" rx="3.4" ry="2.2" fill="#1a1a1a"/>
<ellipse cx="664.6" cy="202.6" rx="2.5" ry="2.6" fill="#fdfaf6" stroke="#3a3a3a" stroke-width="0.5"/>
<path d="M664.6 205.2 V212 M661 208 H668.4" stroke="#4a4a4a" stroke-width="0.6"/>
<path d="M664.4 211.6 L662.4 217.6 M664.8 211.6 L666.6 217.6" stroke="#23409a" stroke-width="1.5"/>
<!-- house -->
<path d="M670 217 V208 L674 204.6 H679.6 L686 196.6 L693.4 203.6 L697.6 207 V216.6 M679.6 204.6 V214 Q684 216 688 213 V207 M672.6 210 V216 M683 199.4 h4 v3 h-4 z M691 208 h4 v3.4 h-4 z" fill="none" stroke="#55555a" stroke-width="0.9"/>
<!-- bottom bar -->
<rect x="577.4" y="234.8" width="155.8" height="6.6" fill="#e9e7e4"/>
<g fill="#dedcd8" stroke="#9a9a98" stroke-width="0.5"><circle cx="646.6" cy="238.3" r="1.7"/><circle cx="655.4" cy="238.3" r="1.7"/><circle cx="664.2" cy="238.3" r="1.7"/></g>
</g>
</g>

<!-- ADD DESKTOP -->
<g id="add" filter="url(#noop)">
<circle cx="363.5" cy="389.5" r="6.85" fill="none" stroke="#fff" stroke-width="1.5"/>
<path d="M359.3 389.5 H367.7 M363.5 385.3 V393.7" stroke="#fff" stroke-width="1.7" fill="none"/>
<text x="377.4" y="393.3" fill="#fff" font-size="9.6" textLength="59" lengthAdjust="spacingAndGlyphs">Add a desktop</text>
<text class="w" x="785" y="350" text-anchor="end" textLength="78" lengthAdjust="spacingAndGlyphs">Windows Technical Preview</text>
<text class="w" x="785" y="359.1" text-anchor="end" textLength="77.3" lengthAdjust="spacingAndGlyphs">Evaluation copy. Build 9841</text>
</g>

<!-- TASKBAR -->
<g id="bar" filter="url(#noop)">
<!-- active buttons -->
<g fill="#68a9df">
<rect x="204" y="418.6" width="34.2" height="23.4"/>
<rect x="240" y="418.6" width="34" height="23.4"/>
<rect x="275.4" y="418.6" width="34.2" height="23.4"/>
<rect x="311" y="418.6" width="34.2" height="23.4"/>
<rect x="346.6" y="418.6" width="34.2" height="23.4"/>
<rect x="382.2" y="418.6" width="34.4" height="23.4"/>
</g>
<g fill="#4a8ccc">
<rect x="238.4" y="418.6" width="1.4" height="23.4"/>
<rect x="274.2" y="418.6" width="1.2" height="23.4"/>
<rect x="309.8" y="418.6" width="1.2" height="23.4"/>
<rect x="345.4" y="418.6" width="1.2" height="23.4"/>
<rect x="381" y="418.6" width="1.2" height="23.4"/>
</g>
<!-- start -->
<path d="M7 425 L13.6 424 V430 H7 Z M14.4 423.9 L22.2 422.7 V430 H14.4 Z M7 430.8 H13.6 V436.8 L7 435.8 Z M14.4 430.8 H22.2 V438 L14.4 436.9 Z" fill="#fff"/>
<!-- search -->
<circle cx="47.6" cy="428.8" r="3.7" fill="none" stroke="#fff" stroke-width="1.4"/>
<path d="M45 431.6 L40.6 436.4" stroke="#fff" stroke-width="1.7" stroke-linecap="round"/>
<!-- task view -->
<rect x="75" y="425.8" width="10" height="7.6" fill="#e2eef9"/>
<rect x="73" y="427.5" width="10.3" height="7.8" fill="#fff" stroke="#8fc0ea" stroke-width="0.5"/>
<!-- IE -->
<g id="tb-ie">
<path d="M105.6 438 Q102.4 433 109.4 426.4 Q116.6 420 121.6 422.2 Q117.4 422.8 112 428 Q106.4 433.6 105.6 438 Z" fill="#ecd27a"/>
<text x="114.8" y="438.1" text-anchor="middle" font-size="25.5" font-weight="bold" fill="#a8def8" textLength="13.8" lengthAdjust="spacingAndGlyphs">e</text>
<path d="M110.6 434.4 Q114 438 119.6 435.6" stroke="#e8f6fd" stroke-width="0.8" fill="none"/>
</g>
<!-- explorer -->
<g id="tb-ex">
<path d="M140.6 425.6 H149 L150.6 424.2 H157.6 V438 H140.6 Z" fill="#f3cf98"/>
<rect x="150.8" y="424.6" width="6.4" height="2.6" fill="#fbf3e4"/>
<rect x="140.6" y="427.4" width="17" height="3.4" fill="#eebc78"/>
<rect x="143" y="430.8" width="12.2" height="7.2" fill="#3d7cc4"/>
<rect x="147.2" y="434.4" width="4" height="1.8" fill="#f3dcb4"/>
</g>
<!-- store -->
<g id="tb-st">
<rect x="176.2" y="421.8" width="17.8" height="16.8" fill="#0c8a20"/>
<path d="M182.4 427.8 V426.6 A2.6 2.6 0 0 1 187.6 426.6 V427.8" fill="none" stroke="#fff" stroke-width="1"/>
<path d="M179 427.6 H190.8 L190 436.6 H179.8 Z" fill="#fff"/>
<path d="M182 430.2 L184.4 429.9 V432 H182 Z M185 429.8 L188 429.4 V432 H185 Z M182 432.6 H184.4 V434.7 L182 434.4 Z M185 432.6 H188 V435.2 L185 434.8 Z" fill="#0c8a20"/>
</g>
<!-- app icons -->
<g id="tb-apps">
<!-- money -->
<rect x="212.5" y="422" width="17.4" height="16.8" fill="#0f8a1e"/>
<g transform="translate(157.3 296.4)">
<path d="M57.7 138.9 V136.6 L61.5 133.5 L64.5 135.6 L69.3 130.8 V138.9 Z" fill="#bfe8b8"/>
<path d="M60 135 V138.9 M62.6 134.6 V138.9 M65.2 135.2 V138.9 M67.6 133 V138.9" stroke="#7fc87a" stroke-width="0.5"/>
<path d="M57.6 134.4 L61.5 131 L64.5 133.2 L68.4 129" stroke="#e8fbe4" stroke-width="1.2" fill="none"/>
<path d="M66.4 127.8 H69.6 V131 Z" fill="#e8fbe4"/>
</g>
<!-- ppt -->
<rect x="256" y="423.6" width="8.4" height="12.8" fill="#fbf3ee"/>
<path d="M258.6 428 H263 M258.6 430.4 H263 M258.6 432.8 H263" stroke="#e0633c" stroke-width="0.9"/>
<circle cx="260.8" cy="425.8" r="1.3" fill="#e0633c"/>
<path d="M247.4 424 L258 422.6 V437.6 L247.4 436.2 Z" fill="#e1552b"/>
<text x="252.6" y="433.4" text-anchor="middle" font-size="9" font-weight="bold" fill="#fff">P</text>
<!-- trip -->
<rect x="284" y="422.2" width="16.8" height="16.6" fill="#5a9443"/>
<path d="M286.8 428.4 Q292.4 425.4 298 428.4" stroke="#222a1c" stroke-width="1" fill="none"/>
<circle cx="289.1" cy="430.8" r="2.6" fill="#ecebd6" stroke="#222a1c" stroke-width="0.9"/>
<circle cx="295.7" cy="430.8" r="2.6" fill="#ecebd6" stroke="#222a1c" stroke-width="0.9"/>
<circle cx="289.1" cy="430.8" r="0.9" fill="#222a1c"/>
<circle cx="295.7" cy="430.8" r="0.9" fill="#222a1c"/>
<!-- onenote -->
<rect x="329.4" y="423.6" width="8.4" height="12.8" fill="#f3e9f3"/>
<path d="M335.2 425.4 H337.8 V428 H335.2 Z M335.2 428.8 H337.8 V431.4 H335.2 Z M335.2 432.2 H337.8 V434.8 H335.2 Z" fill="#a04d9c"/>
<path d="M320.4 424 L331.4 422.6 V437.6 L320.4 436.2 Z" fill="#80397b"/>
<text x="325.8" y="433.4" text-anchor="middle" font-size="9" font-weight="bold" fill="#fff">N</text>
<!-- excel -->
<rect x="364.6" y="423.6" width="8.6" height="12.8" fill="#eef6ef"/>
<path d="M366.4 425.2 H372 M366.4 427.8 H372 M366.4 430.4 H372 M366.4 433 H372 M366.4 435.2 H372 M369.4 424 V436" stroke="#2f9a5a" stroke-width="0.8"/>
<path d="M355 424 L366 422.6 V437.6 L355 436.2 Z" fill="#1f9a52"/>
<text x="360.5" y="433.4" text-anchor="middle" font-size="9" font-weight="bold" fill="#fff">X</text>
<!-- fresh paint -->
<rect x="391.4" y="422" width="17.4" height="16.8" fill="#fcc30e"/>
<path d="M394.6 425.4 L405.6 427 V433.4 L394.6 435.6 Z" fill="#f9b80e" stroke="#b5431a" stroke-width="1.2"/>
<path d="M394.4 425 V436" stroke="#a93a16" stroke-width="1.6"/>
</g>
<!-- tray -->
<g id="tray">
<rect x="643.2" y="426.2" width="17.2" height="9.4" rx="1.2" fill="#dbe6f0" stroke="#f4f8fb" stroke-width="0.8"/>
<g fill="#5a6a7a"><rect x="645" y="427.8" width="1.4" height="1.3"/><rect x="647.2" y="427.8" width="1.4" height="1.3"/><rect x="649.4" y="427.8" width="1.4" height="1.3"/><rect x="651.6" y="427.8" width="1.4" height="1.3"/><rect x="653.8" y="427.8" width="1.4" height="1.3"/><rect x="656" y="427.8" width="1.4" height="1.3"/><rect x="658" y="427.8" width="1" height="1.3"/>
<rect x="645" y="430" width="1.4" height="1.3"/><rect x="647.2" y="430" width="1.4" height="1.3"/><rect x="649.4" y="430" width="1.4" height="1.3"/><rect x="651.6" y="430" width="1.4" height="1.3"/><rect x="653.8" y="430" width="1.4" height="1.3"/><rect x="656" y="430" width="1.4" height="1.3"/><rect x="658" y="430" width="1" height="1.3"/>
<rect x="645" y="432.4" width="1.6" height="1.3"/><rect x="647.6" y="432.4" width="8" height="1.3"/><rect x="656.6" y="432.4" width="2.4" height="1.3"/></g>
<path d="M671.8 432.8 L674.4 430.2 L677 432.8 Z" fill="#fff"/>
<path d="M690 426.8 V435.2" stroke="#fff" stroke-width="1.1"/>
<path d="M690.6 427.2 Q692.6 426.2 694.4 427.4 Q696.4 428.6 698.4 427.6 V432 Q696.4 433 694.4 431.8 Q692.6 430.6 690.6 431.6 Z" fill="#fff"/>
<g fill="#eef5fb"><rect x="708.8" y="433.4" width="1.3" height="1.4"/><rect x="710.7" y="432.2" width="1.3" height="2.6"/><rect x="712.6" y="431" width="1.3" height="3.8"/><rect x="714.5" y="429.6" width="1.3" height="5.2"/><rect x="716.4" y="428.2" width="1.3" height="6.6"/></g>
<path d="M727 429.8 H728.8 L731.4 427.4 V435.2 L728.8 432.8 H727 Z" fill="#fff"/>
<path d="M732.8 428.6 Q734.8 431.3 732.8 434 M734.4 427.2 Q737.4 431.3 734.4 435.4" stroke="#fff" stroke-width="0.8" fill="none"/>
</g>
<text class="c" x="762.8" y="429.2" text-anchor="middle" textLength="29" lengthAdjust="spacingAndGlyphs">10:24 AM</text>
<text class="c" x="763.1" y="439.2" text-anchor="middle" textLength="31" lengthAdjust="spacingAndGlyphs">9/30/2014</text>
</g>
</svg>
</body>
</html>
